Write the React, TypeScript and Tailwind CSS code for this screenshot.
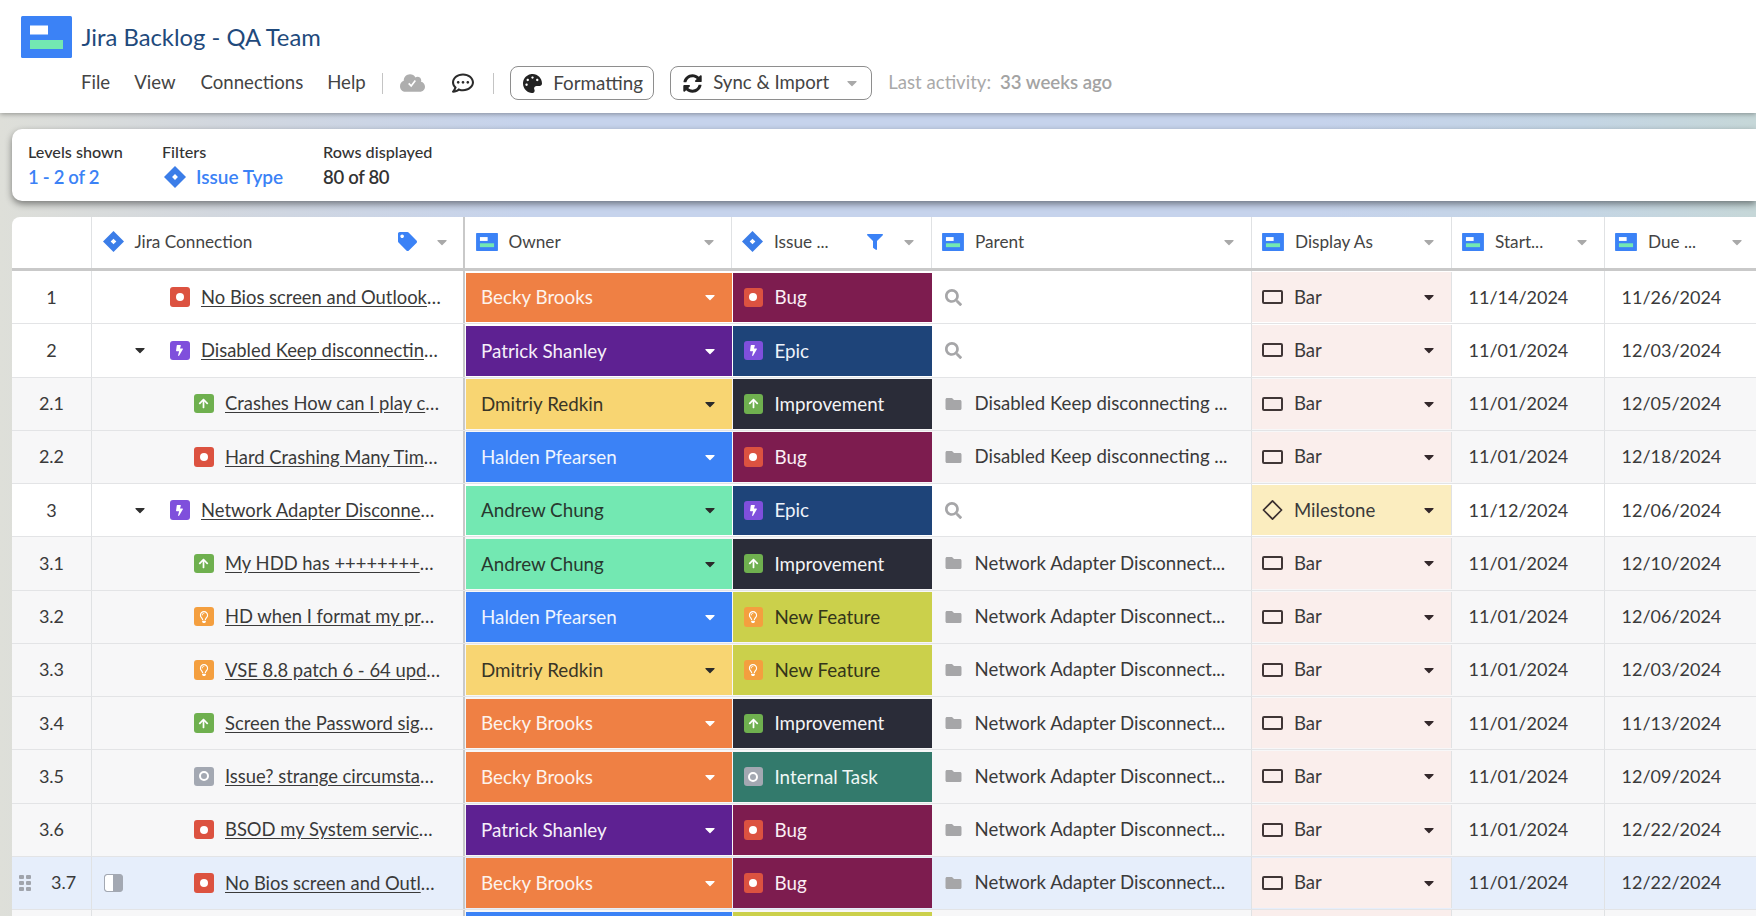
import { FaArrowUp, FaBolt, FaCaretDown, FaCloud, FaFilter, FaFolder, FaPalette, FaRegCommentDots, FaRegLightbulb, FaSearch, FaSyncAlt, FaTag } from "react-icons/fa";

const columns = "grid grid-cols-[80px_373px_266.5px_200px_320px_200px_153px_153px]";

const owners: Record<string, string> = {
    "Becky Brooks": "bg-[#ef8044] text-[#fdf3ec]",
    "Patrick Shanley": "bg-[#5e2192] text-[#f6f0fa]",
    "Dmitriy Redkin": "bg-[#f8d572] text-[#3a3526]",
    "Halden Pfearsen": "bg-[#3b82f6] text-[#eef4ff]",
    "Andrew Chung": "bg-[#73e8b2] text-[#28382f]",
};

const issueColors: Record<string, string> = {
    Bug: "bg-[#7d1c4f] text-[#fbeef4]",
    Epic: "bg-[#1e4479] text-[#eef3fa]",
    Improvement: "bg-[#2a2c38] text-[#f3f3f5]",
    "New Feature": "bg-[#cbd04b] text-[#33351a]",
    "Internal Task": "bg-[#337a6c] text-[#eef7f5]",
};

type Row = {
    num: string;
    title: string;
    owner: string;
    issue: string;
    parent?: string;
    milestone?: boolean;
    start: string;
    due: string;
};

const adapter = "Network Adapter Disconnect...";
const keep = "Disabled Keep disconnecting ...";

const rows: Row[] = [
    { num: "1", title: "No Bios screen and Outlook", owner: "Becky Brooks", issue: "Bug", start: "11/14/2024", due: "11/26/2024" },
    { num: "2", title: "Disabled Keep disconnectin", owner: "Patrick Shanley", issue: "Epic", start: "11/01/2024", due: "12/03/2024" },
    { num: "2.1", title: "Crashes How can I play c", owner: "Dmitriy Redkin", issue: "Improvement", parent: keep, start: "11/01/2024", due: "12/05/2024" },
    { num: "2.2", title: "Hard Crashing Many Tim", owner: "Halden Pfearsen", issue: "Bug", parent: keep, start: "11/01/2024", due: "12/18/2024" },
    { num: "3", title: "Network Adapter Disconne", owner: "Andrew Chung", issue: "Epic", milestone: true, start: "11/12/2024", due: "12/06/2024" },
    { num: "3.1", title: "My HDD has ++++++++", owner: "Andrew Chung", issue: "Improvement", parent: adapter, start: "11/01/2024", due: "12/10/2024" },
    { num: "3.2", title: "HD when I format my pr", owner: "Halden Pfearsen", issue: "New Feature", parent: adapter, start: "11/01/2024", due: "12/06/2024" },
    { num: "3.3", title: "VSE 8.8 patch 6 - 64 upd", owner: "Dmitriy Redkin", issue: "New Feature", parent: adapter, start: "11/01/2024", due: "12/03/2024" },
    { num: "3.4", title: "Screen the Password sig", owner: "Becky Brooks", issue: "Improvement", parent: adapter, start: "11/01/2024", due: "11/13/2024" },
    { num: "3.5", title: "Issue? strange circumsta", owner: "Becky Brooks", issue: "Internal Task", parent: adapter, start: "11/01/2024", due: "12/09/2024" },
    { num: "3.6", title: "BSOD my System servic", owner: "Patrick Shanley", issue: "Bug", parent: adapter, start: "11/01/2024", due: "12/22/2024" },
    { num: "3.7", title: "No Bios screen and Outl", owner: "Becky Brooks", issue: "Bug", parent: adapter, start: "11/01/2024", due: "12/22/2024" },
];

function JiraIcon({ className }: { className: string }) {
    return (
        <svg viewBox="0 0 24 24" className={className}>
            <path d="M12 0 24 12 12 24 0 12Z" fill="#3b7de8" />
            <path d="M12 8.8 15.2 12 12 15.2 8.8 12Z" fill="#fff" />
        </svg>
    );
}

function SheetIcon({ className }: { className: string }) {
    return (
        <svg viewBox="0 0 51 42" className={className}>
            <rect width="51" height="42" rx="1.5" fill="#3b82f6" />
            <rect x="9" y="9.5" width="18" height="9" fill="#fff" />
            <rect x="9" y="24" width="33" height="9" fill="#73e8b2" />
        </svg>
    );
}

function IssueIcon({ type }: { type: string }) {
    if (type === "Bug") {
        return (
            <span className="flex h-[19.5px] w-[19.5px] shrink-0 items-center justify-center rounded-[3px] bg-[#dc5240]">
                <span className="h-2 w-2 rounded-full bg-white" />
            </span>
        );
    }
    if (type === "Epic") {
        return (
            <span className="flex h-[19.5px] w-[19.5px] shrink-0 items-center justify-center rounded-[3px] bg-[#7f4fdc]">
                <FaBolt className="h-[11px] w-[11px] text-white" />
            </span>
        );
    }
    if (type === "Improvement") {
        return (
            <span className="flex h-[19.5px] w-[19.5px] shrink-0 items-center justify-center rounded-[3px] bg-[#6fb04f]">
                <FaArrowUp className="h-[11px] w-[11px] text-white" />
            </span>
        );
    }
    if (type === "New Feature") {
        return (
            <span className="flex h-[19.5px] w-[19.5px] shrink-0 items-center justify-center rounded-[3px] bg-[#f49f3f]">
                <FaRegLightbulb className="h-[12px] w-[12px] text-white" />
            </span>
        );
    }
    return (
        <span className="flex h-[19.5px] w-[19.5px] shrink-0 items-center justify-center rounded-[3px] bg-[#a3a8b2]">
            <span className="h-[10px] w-[10px] rounded-full border-2 border-white" />
        </span>
    );
}

function Caret({ className }: { className: string }) {
    return <FaCaretDown className={`h-[16px] w-[16px] shrink-0 ${className}`} />;
}

function HeaderCell({ icon, label, extra, caretMargin, border }: { icon: "jira" | "sheet"; label: string; extra?: React.ReactNode; caretMargin: string; border?: string }) {
    return (
        <div className={`flex items-center pb-[2px] pl-[10.5px] ${border ?? "border-r border-[#e0e2e4]"}`}>
            {icon === "jira" ? <JiraIcon className="h-[21px] w-[21px] shrink-0" /> : <SheetIcon className="h-[18px] w-[22px] shrink-0" />}
            <span className="ml-[11px] flex-1 text-[17.2px] text-[#444]">{label}</span>
            {extra}
            <Caret className={`text-[#a9a9a9] ${caretMargin}`} />
        </div>
    );
}

function TableRow({ row }: { row: Row }) {
    const sub = row.num.includes(".");
    const active = row.num === "3.7";
    const rowBg = active ? "bg-[#e6eefb]" : sub ? "bg-[#f7f7f8]" : "bg-white";
    const expandable = row.num === "2" || row.num === "3";
    const ownerStyle = owners[row.owner];
    const issueStyle = issueColors[row.issue];
    const dark = row.owner === "Dmitriy Redkin" || row.owner === "Andrew Chung";

    return (
        <div className={`${columns} h-[53.25px] border-b border-[#e3e4e6] text-[18.6px] text-[#3a3a3a] ${rowBg}`}>
            <div className="flex items-center justify-center border-r border-[#e0e2e4] text-[18px]">
                {active ? (
                    <div className="flex w-full items-center pl-[7px]">
                        <div className="grid grid-cols-2 gap-[2px]">
                            {[0, 1, 2, 3, 4, 5].map((i) => (
                                <span key={i} className="h-[4px] w-[5px] rounded-[1px] bg-[#a0a4ac]" />
                            ))}
                        </div>
                        <span className="ml-[20px]">{row.num}</span>
                    </div>
                ) : (
                    row.num
                )}
            </div>
            <div className="flex items-center border-r-2 border-[#c9c9c9]">
                {active ? (
                    <span className="ml-[12px] flex h-[18px] w-[19px] overflow-hidden rounded-[3px] border border-[#a3a8b2] bg-[#a3a8b2]">
                        <span className="w-[8px] rounded-l-[2px] bg-white" />
                    </span>
                ) : null}
                {expandable ? <FaCaretDown className="ml-[40px] h-[16px] w-[16px] text-[#2f2f2f]" /> : null}
                <span className={`flex items-center ${active ? "ml-[71px]" : sub ? "ml-[102px]" : expandable ? "ml-[22px]" : "ml-[78px]"}`}>
                    <IssueIcon type={row.issue} />
                    <span className="ml-[11.5px] whitespace-nowrap pt-[1px] text-[18.4px]">
                        <span className="underline underline-offset-2">{row.title}</span>…
                    </span>
                </span>
            </div>
            <div className="pt-[1.5px] pb-[1px] pl-[1px]">
                <div className={`flex h-full items-center justify-between pl-[15px] pr-[14px] text-[18.8px] ${ownerStyle}`}>
                    <span>{row.owner}</span>
                    <Caret className={dark ? "text-[#2b2b2b]" : "text-white"} />
                </div>
            </div>
            <div className="pt-[1.5px] pb-[1px] pl-[1.5px]">
                <div className={`flex h-full items-center pl-[10.5px] text-[18.8px] ${issueStyle}`}>
                    <IssueIcon type={row.issue} />
                    <span className="ml-[11.5px]">{row.issue}</span>
                </div>
            </div>
            <div className="flex items-center border-r border-[#e0e2e4] pl-[13px]">
                {row.parent ? <FaFolder className="h-[16px] w-[17px] text-[#a6a6a8]" /> : <FaSearch className="h-[17px] w-[17px] text-[#a6a6a8]" />}
                <span className="ml-[13px] whitespace-nowrap pt-[1px]">{row.parent}</span>
            </div>
            <div className={`my-[1px] flex items-center border-r border-[#e0e2e4] pl-[10.5px] pr-[14px] ${row.milestone ? "bg-[#fbedbf]" : "bg-[#faeeec]"}`}>
                {row.milestone ? (
                    <svg viewBox="0 0 22 22" className="h-[22px] w-[21px] shrink-0">
                        <path d="M11 1.5 20.5 11 11 20.5 1.5 11Z" fill="none" stroke="#3a2f2f" strokeWidth="1.8" strokeLinejoin="round" />
                    </svg>
                ) : (
                    <span className="h-[14px] w-[21px] shrink-0 rounded-[2px] border-2 border-[#3f3535]" />
                )}
                <span className="ml-[11px] flex-1 pt-[1px]">{row.milestone ? "Milestone" : "Bar"}</span>
                <Caret className="text-[#33282b]" />
            </div>
            <div className="flex items-center border-r border-[#e0e2e4] pl-[17px] text-[18px]">{row.start}</div>
            <div className="flex items-center pl-[17px] text-[18px]">{row.due}</div>
        </div>
    );
}

export default function App() {
    return (
        <div className="flex h-[916px] flex-col overflow-hidden bg-[linear-gradient(90deg,#dedfd9_0%,#d2d7de_12%,#c6d3ec_30%,#c6d3ec_75%,#c4d5e4_90%,#c6d7d8_100%)] font-['Lato',sans-serif]">
            <header className="relative h-[113px] shrink-0 bg-white shadow-[0_1px_5px_rgba(0,0,0,0.35)]">
                <div className="flex items-center pl-[20.5px] pt-4">
                    <SheetIcon className="h-[42px] w-[51px]" />
                    <h1 className="ml-[10px] pt-[1px] text-[23.8px] leading-[41px] text-[#1f4a7c]">Jira Backlog - QA Team</h1>
                </div>
                <div className="mt-[8px] flex h-[34px] items-center pl-[81px] text-[18.6px] text-[#444]">
                    <span>File</span>
                    <span className="ml-[24px]">View</span>
                    <span className="ml-[25px]">Connections</span>
                    <span className="ml-[24px]">Help</span>
                    <span className="ml-[16px] h-[21px] w-px bg-[#c4c4c4]" />
                    <span className="relative ml-[17px] flex items-center justify-center">
                        <FaCloud className="h-[24px] w-[25px] text-[#aeaeae]" />
                        <svg viewBox="0 0 12 12" className="absolute h-[10px] w-[10px]">
                            <path d="M2 6.5 5 9.5 10 3" fill="none" stroke="#fff" strokeWidth="2" />
                        </svg>
                    </span>
                    <FaRegCommentDots className="ml-[27px] h-[22px] w-[22px] text-[#2b2b2b]" />
                    <span className="ml-[19px] h-[21px] w-px bg-[#c4c4c4]" />
                    <button className="ml-[16.5px] flex h-[34px] w-[144px] items-center rounded-[8px] border border-[#8e8e8e] pl-[12px]">
                        <FaPalette className="h-[19px] w-[19px] text-[#222]" />
                        <span className="ml-[11px] text-[18.8px]">Formatting</span>
                    </button>
                    <button className="ml-[16px] flex h-[34px] w-[202px] items-center rounded-[8px] border border-[#8e8e8e] pl-[12px]">
                        <FaSyncAlt className="h-[19px] w-[19px] text-[#222]" />
                        <span className="ml-[11px]">Sync &amp; Import</span>
                        <FaCaretDown className="ml-[15px] h-[16px] w-[16px] text-[#a9a9a9]" />
                    </button>
                    <span className="ml-[16px] pb-[1px] text-[#a9a9a9]">Last activity:</span>
                    <span className="ml-[9px] pb-[1px] font-semibold text-[#a3a3a3]">33 weeks ago</span>
                </div>
            </header>

            <section className="ml-3 mt-4 flex h-[72px] shrink-0 items-center rounded-l-[10px] bg-white pl-4 shadow-[0_3px_7px_rgba(0,0,0,0.45)]">
                <div className="w-[134px]">
                    <div className="text-[16.2px] font-medium leading-5 text-[#333]">Levels shown</div>
                    <div className="mt-[3px] text-[18.5px] font-semibold leading-6 tracking-[-0.3px] text-[#3b82f6]">1 - 2 of 2</div>
                </div>
                <div className="w-[161px]">
                    <div className="text-[16.2px] font-medium leading-5 text-[#333]">Filters</div>
                    <div className="mt-[3px] flex items-center leading-6">
                        <JiraIcon className="ml-[2px] h-[22px] w-[22px]" />
                        <span className="ml-[10px] text-[19px] font-semibold text-[#3b82f6]">Issue Type</span>
                    </div>
                </div>
                <div>
                    <div className="text-[16.2px] font-medium leading-5 text-[#333]">Rows displayed</div>
                    <div className="mt-[3px] text-[18.5px] font-semibold leading-6 tracking-[-0.3px] text-[#333]">80 of 80</div>
                </div>
            </section>

            <main className="ml-3 mt-4 flex-1 overflow-hidden rounded-tl-[8px] bg-white">
                <div className={`${columns} h-[54px] border-b-[3px] border-[#c9c9c9]`}>
                    <div className="border-r border-[#e0e2e4]" />
                    <HeaderCell
                        icon="jira"
                        label="Jira Connection"
                        extra={<FaTag className="mr-[17px] h-[19px] w-[19px] text-[#3b82f6]" />}
                        caretMargin="mr-[13px]"
                        border="border-r-2 border-[#c9c9c9]"
                    />
                    <HeaderCell icon="sheet" label="Owner" caretMargin="mr-[14px]" />
                    <HeaderCell icon="jira" label="Issue ..." extra={<FaFilter className="mr-[18px] h-[16px] w-[16px] text-[#3b82f6]" />} caretMargin="mr-[14px]" />
                    <HeaderCell icon="sheet" label="Parent" caretMargin="mr-[14px]" />
                    <HeaderCell icon="sheet" label="Display As" caretMargin="mr-[14px]" />
                    <HeaderCell icon="sheet" label="Start..." caretMargin="mr-[14px]" />
                    <HeaderCell icon="sheet" label="Due ..." caretMargin="mr-[12px]" />
                </div>
                {rows.map((row) => (
                    <TableRow key={row.num} row={row} />
                ))}
                <div className={`${columns} h-[53.25px] bg-[#f7f7f8]`}>
                    <div className="border-r border-[#e0e2e4]" />
                    <div className="border-r-2 border-[#c9c9c9]" />
                    <div className="pt-[1.5px] pl-[1px]">
                        <div className="h-full bg-[#3b82f6]" />
                    </div>
                    <div className="pt-[1.5px] pl-[1.5px]">
                        <div className="h-full bg-[#cbd04b]" />
                    </div>
                    <div className="border-r border-[#e0e2e4]" />
                    <div className="border-r border-[#e0e2e4] bg-[#faeeec]" />
                    <div className="border-r border-[#e0e2e4]" />
                </div>
            </main>
        </div>
    );
}
